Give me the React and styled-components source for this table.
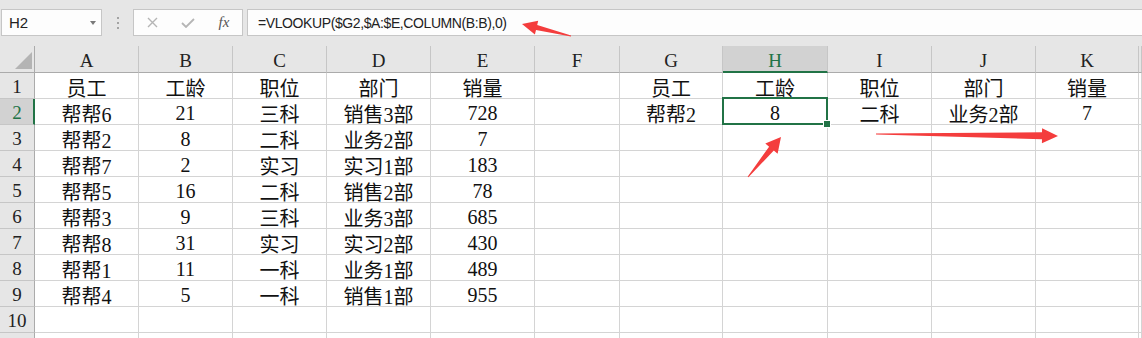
import React from "react";
import styled, { createGlobalStyle } from "styled-components";

const GlobalStyle = createGlobalStyle`
  html, body {
    margin: 0;
    padding: 0;
    background: #ffffff;
    overflow: hidden;
  }
`;

const GREEN = "#217346";

const COLUMNS = [
  { key: "A", w: 104 },
  { key: "B", w: 94 },
  { key: "C", w: 94 },
  { key: "D", w: 104 },
  { key: "E", w: 104 },
  { key: "F", w: 85 },
  { key: "G", w: 103 },
  { key: "H", w: 105 },
  { key: "I", w: 104 },
  { key: "J", w: 104 },
  { key: "K", w: 103 },
];

const ROWS = [
  ["员工", "工龄", "职位", "部门", "销量", "", "员工", "工龄", "职位", "部门", "销量"],
  ["帮帮6", "21", "三科", "销售3部", "728", "", "帮帮2", "8", "二科", "业务2部", "7"],
  ["帮帮2", "8", "二科", "业务2部", "7"],
  ["帮帮7", "2", "实习", "实习1部", "183"],
  ["帮帮5", "16", "二科", "销售2部", "78"],
  ["帮帮3", "9", "三科", "业务3部", "685"],
  ["帮帮8", "31", "实习", "实习2部", "430"],
  ["帮帮1", "11", "一科", "业务1部", "489"],
  ["帮帮4", "5", "一科", "销售1部", "955"],
  [],
];

const Page = styled.div`
  position: relative;
  width: 1142px;
  height: 338px;
  overflow: hidden;
  background: #e6e6e6;
`;

/* ---------- formula bar ---------- */

const Toolbar = styled.div`
  display: flex;
  align-items: flex-start;
  height: 46px;
  box-sizing: border-box;
  padding: 9px 0 0 1px;
  background: #e6e6e6;
  font-family: "Liberation Sans", "Noto Sans CJK SC", sans-serif;
`;

const Box = styled.div`
  display: flex;
  align-items: center;
  height: 27px;
  box-sizing: border-box;
  border: 1px solid #c6c6c6;
  background: #fdfdfd;
`;

const NameBox = styled(Box)`
  width: 101px;
  padding: 0 5px 0 7px;
  justify-content: space-between;
  font-size: 15px;
  color: #222;
`;

const Caret = styled.span`
  width: 0;
  height: 0;
  border-left: 3.5px solid transparent;
  border-right: 3.5px solid transparent;
  border-top: 4px solid #7a7a7a;
`;

const Grip = styled.div`
  width: 31px;
  height: 27px;
  display: flex;
  flex-direction: column;
  align-items: center;
  justify-content: center;
  gap: 3px;

  span {
    width: 2px;
    height: 2px;
    background: #a3a3a3;
  }
`;

const FxGroup = styled(Box)`
  width: 110px;
  margin-right: 4px;
`;

const FxButton = styled.div`
  width: 36px;
  height: 100%;
  display: flex;
  align-items: center;
  justify-content: center;
  color: ${(p) => (p.$dim ? "#b5b5b5" : "#555")};
  font-family: "Liberation Serif", serif;
  font-style: italic;
  font-size: 15px;
`;

const FormulaBox = styled(Box)`
  flex: 1;
  margin-right: -2px;
  padding-left: 10px;
  font-size: 14px;
  letter-spacing: -0.4px;
  color: #222;
`;

/* ---------- sheet ---------- */

const Sheet = styled.div`
  display: grid;
  grid-template-columns: 35px ${COLUMNS.map((c) => `${c.w}px`).join(" ")} 1fr;
  grid-template-rows: 27px;
  grid-auto-rows: 26px;
  background: #ffffff;
`;

const Corner = styled.div`
  display: flex;
  align-items: flex-end;
  justify-content: flex-end;
  padding: 0 2px 3px 0;
  box-sizing: border-box;
  background: #e6e6e6;
  border-right: 1px solid #ababab;
  border-bottom: 1px solid #ababab;
`;

const ColHeader = styled.div`
  display: flex;
  align-items: center;
  justify-content: center;
  box-sizing: border-box;
  background: ${(p) => (p.$active ? "#d2d2d2" : "#e6e6e6")};
  border-right: 1px solid #c6c6c6;
  border-bottom: ${(p) => (p.$active ? `2px solid ${GREEN}` : "1px solid #ababab")};
  padding-top: ${(p) => (p.$active ? "4px" : "3px")};
  color: ${(p) => (p.$active ? GREEN : "#222")};
  font-family: "Liberation Serif", serif;
  font-size: 19px;
`;

const RowHeader = styled.div`
  display: flex;
  align-items: center;
  justify-content: center;
  box-sizing: border-box;
  background: ${(p) => (p.$active ? "#d2d2d2" : "#e6e6e6")};
  border-right: ${(p) => (p.$active ? `2px solid ${GREEN}` : "1px solid #ababab")};
  border-bottom: 1px solid #c6c6c6;
  padding-top: 3px;
  padding-left: ${(p) => (p.$active ? "1px" : "0")};
  color: ${(p) => (p.$active ? GREEN : "#222")};
  font-family: "Liberation Serif", serif;
  font-size: 19px;
`;

const Cell = styled.div`
  position: relative;
  display: flex;
  align-items: center;
  justify-content: center;
  box-sizing: border-box;
  padding-top: 3px;
  border-right: 1px solid #d4d4d4;
  border-bottom: 1px solid #d4d4d4;
  font-family: "Liberation Serif", "Noto Sans CJK SC", serif;
  font-size: 20px;
  color: #111;
  white-space: nowrap;

  ${(p) =>
    p.$selected &&
    `
    &::after {
      content: "";
      position: absolute;
      top: -2px;
      left: -1px;
      right: -1px;
      bottom: -1px;
      border: 2px solid ${GREEN};
      pointer-events: none;
    }
    &::before {
      content: "";
      position: absolute;
      right: -4px;
      bottom: -4px;
      width: 6px;
      height: 6px;
      background: ${GREEN};
      border: 1px solid #fff;
      z-index: 2;
    }
  `}
`;

const Overlay = styled.svg`
  position: absolute;
  left: 0;
  top: 0;
  width: 1142px;
  height: 338px;
  pointer-events: none;
`;

function arrowPoints([tx, ty], [px, py], head, half, neck, tail) {
  const dx = px - tx;
  const dy = py - ty;
  const len = Math.hypot(dx, dy);
  const ux = dx / len;
  const uy = dy / len;
  const nx = -uy;
  const ny = ux;
  const bx = px - ux * head;
  const by = py - uy * head;
  const pts = [
    [px, py],
    [bx + nx * half, by + ny * half],
    [bx + nx * neck, by + ny * neck],
    [tx + nx * tail, ty + ny * tail],
    [tx - nx * tail, ty - ny * tail],
    [bx - nx * neck, by - ny * neck],
    [bx - nx * half, by - ny * half],
  ];
  return pts.map((p) => p.map((v) => v.toFixed(1)).join(",")).join(" ");
}

const ARROWS = [
  { from: [571, 36], to: [522, 24], head: 15, half: 7, neck: 2.5 },
  { from: [748, 177], to: [781, 137], head: 15, half: 8, neck: 3 },
  { from: [876, 134], to: [1058, 136], head: 16, half: 7.5, neck: 3.5 },
];

const Arrows = () => (
  <Overlay viewBox="0 0 1142 338">
    {ARROWS.map((a, i) => (
      <polygon
        key={i}
        points={arrowPoints(a.from, a.to, a.head, a.half, a.neck, 0.5)}
        fill="#f43d3d"
      />
    ))}
  </Overlay>
);

const App = () => {
  return (
    <Page>
      <GlobalStyle />
      <Toolbar>
        <NameBox>
          <span>H2</span>
          <Caret />
        </NameBox>
        <Grip>
          <span />
          <span />
          <span />
        </Grip>
        <FxGroup>
          <FxButton $dim>
            <svg width="11" height="11" viewBox="0 0 11 11">
              <path d="M1 1L10 10M10 1L1 10" stroke="#b5b5b5" strokeWidth="1.4" fill="none" />
            </svg>
          </FxButton>
          <FxButton $dim>
            <svg width="14" height="10" viewBox="0 0 14 10">
              <path d="M1 5L5 9L13 1" stroke="#b5b5b5" strokeWidth="1.8" fill="none" />
            </svg>
          </FxButton>
          <FxButton>fx</FxButton>
        </FxGroup>
        <FormulaBox>=VLOOKUP($G2,$A:$E,COLUMN(B:B),0)</FormulaBox>
      </Toolbar>

      <Sheet>
        <Corner>
          <svg width="17" height="17" viewBox="0 0 17 17">
            <polygon points="17,0 17,17 0,17" fill="#b4b4b4" />
          </svg>
        </Corner>
        {COLUMNS.map((c) => (
          <ColHeader key={c.key} $active={c.key === "H"}>
            {c.key}
          </ColHeader>
        ))}
        <ColHeader />

        {ROWS.map((row, r) => (
          <React.Fragment key={r}>
            <RowHeader $active={r === 1}>{r + 1}</RowHeader>
            {COLUMNS.map((c, ci) => (
              <Cell key={c.key} $selected={r === 1 && c.key === "H"}>
                {row[ci] || ""}
              </Cell>
            ))}
            <Cell />
          </React.Fragment>
        ))}

        {/* row 11 is only a sliver at the bottom edge */}
        <RowHeader />
        {COLUMNS.map((c) => (
          <Cell key={c.key} />
        ))}
        <Cell />
      </Sheet>

      <Arrows />
    </Page>
  );
};

export default App;
